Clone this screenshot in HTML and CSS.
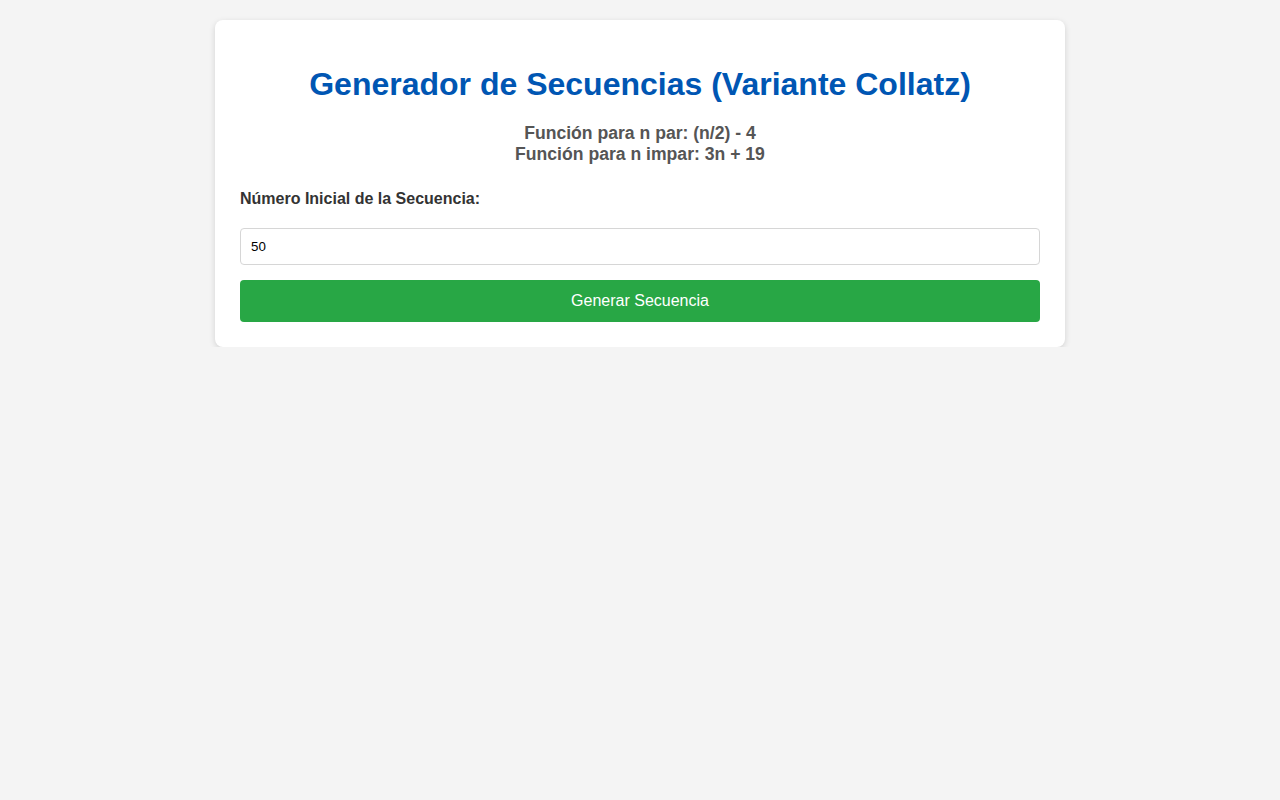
FILE: index.html
```html
<!DOCTYPE html>
<html lang="es">
<head>
<meta charset="utf-8">
<title>Generador de Secuencias</title>
<link rel="stylesheet" href="styles.css">
</head>
<body>
<div class="card">
  <h1 class="title">Generador de Secuencias (Variante Collatz)</h1>
  <p class="rules">Función para n par: (n/2) - 4<br>Función para n impar: 3n + 19</p>
  <label class="label" for="start">Número Inicial de la Secuencia:</label>
  <input class="field" id="start" type="number" value="50">
  <button class="btn" type="button">Generar Secuencia</button>
</div>
</body>
</html>
```

FILE: styles.css
```css
html, body {
  margin: 0;
  padding: 0;
}
body {
  background: #f4f4f4;
  font-family: "Liberation Sans", Arial, sans-serif;
  color: #333;
  padding-top: 20px;
}
.card {
  width: 850px;
  box-sizing: border-box;
  margin: 0 auto;
  background: #fff;
  border-radius: 8px;
  box-shadow: 0 2px 6px rgba(0, 0, 0, 0.14);
  padding: 25px;
  display: flex;
  flex-direction: column;
}
.title {
  margin: 21px 0 20px;
  font-size: 32px;
  font-weight: bold;
  color: #0056b3;
  text-align: center;
  line-height: normal;
}
.rules {
  margin: 0;
  font-size: 17.6px;
  font-weight: bold;
  color: #555;
  text-align: center;
  line-height: normal;
}
.label {
  margin-top: 25px;
  margin-bottom: 20px;
  font-size: 16px;
  font-weight: bold;
  color: #333;
}
.field {
  box-sizing: border-box;
  width: 100%;
  height: 37px;
  padding: 10px;
  border: 1px solid #d6d6d6;
  border-radius: 4px;
  font-family: "Liberation Sans", Arial, sans-serif;
  font-size: 13.33px;
  color: #000;
  margin: 0;
  -moz-appearance: textfield;
}
.field::-webkit-outer-spin-button,
.field::-webkit-inner-spin-button {
  -webkit-appearance: none;
  margin: 0;
}
.btn {
  margin-top: 15px;
  height: 42px;
  padding: 0;
  border: none;
  border-radius: 4px;
  background: #28a745;
  color: #fff;
  font-family: "Liberation Sans", Arial, sans-serif;
  font-size: 16px;
  cursor: pointer;
}
```
